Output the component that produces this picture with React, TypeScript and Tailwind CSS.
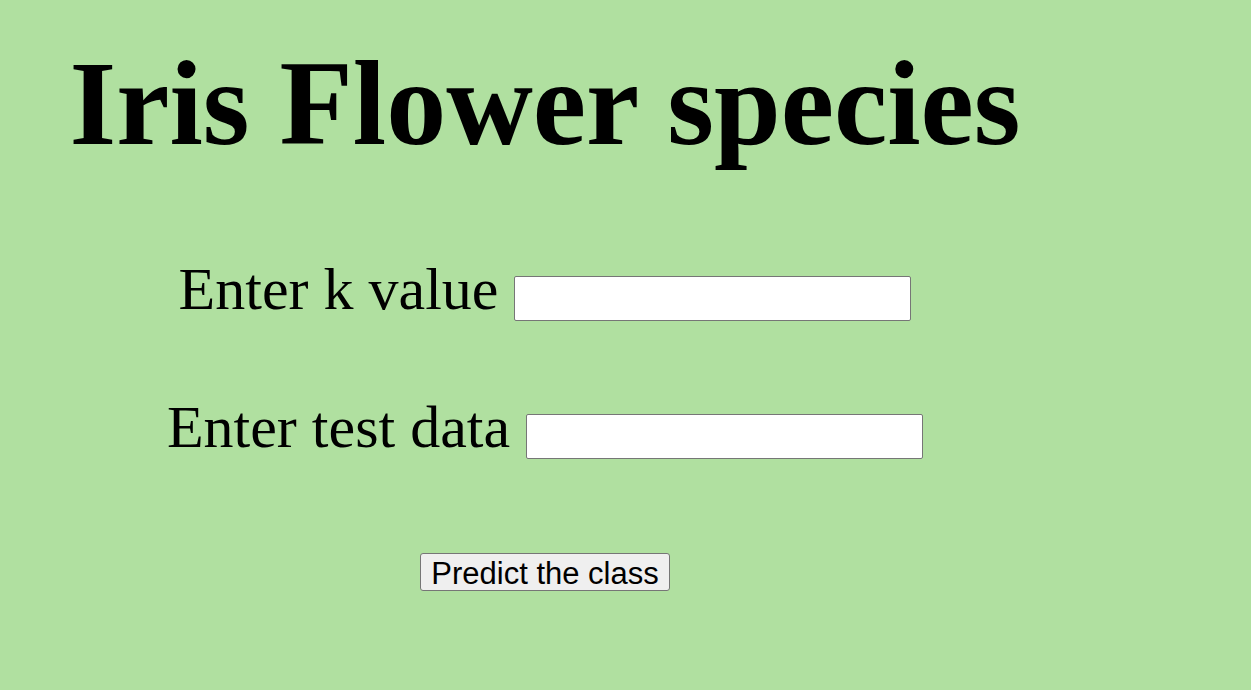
export default function App() {
  return (
    <div className="min-h-[690px] w-full bg-[#b0e0a0] font-['Liberation_Serif','Times_New_Roman',serif] text-black">
      <div className="w-[1090px] flex flex-col items-center pt-[44px]">
        {/* Heading */}
        <h1 className="text-[120px] font-bold leading-none whitespace-nowrap">Iris Flower species</h1>

        {/* Form */}
        <form className="flex flex-col items-center mt-[95px]" onSubmit={(e) => e.preventDefault()}>
          <div className="flex items-start gap-[16px]">
            <label className="text-[60px] leading-none whitespace-nowrap">Enter k value</label>
            <input
              type="text"
              className="mt-[17px] w-[397px] h-[45px] bg-white border border-[#767676] rounded-[2px] px-2 text-base outline-none"
            />
          </div>

          <div className="flex items-start gap-[16px] mt-[76px]">
            <label className="text-[60px] leading-none whitespace-nowrap">Enter test data</label>
            <input
              type="text"
              className="mt-[17px] w-[397px] h-[45px] bg-white border border-[#767676] rounded-[2px] px-2 text-base outline-none"
            />
          </div>

          <button
            type="submit"
            className="mt-[94px] w-[250px] h-[38px] flex items-center justify-center pt-[3px] bg-[#efefef] border border-[#767676] rounded-[3px] font-['Liberation_Sans',Arial,sans-serif] text-[31px] leading-none"
          >
            Predict the class
          </button>
        </form>
      </div>
    </div>
  );
}
